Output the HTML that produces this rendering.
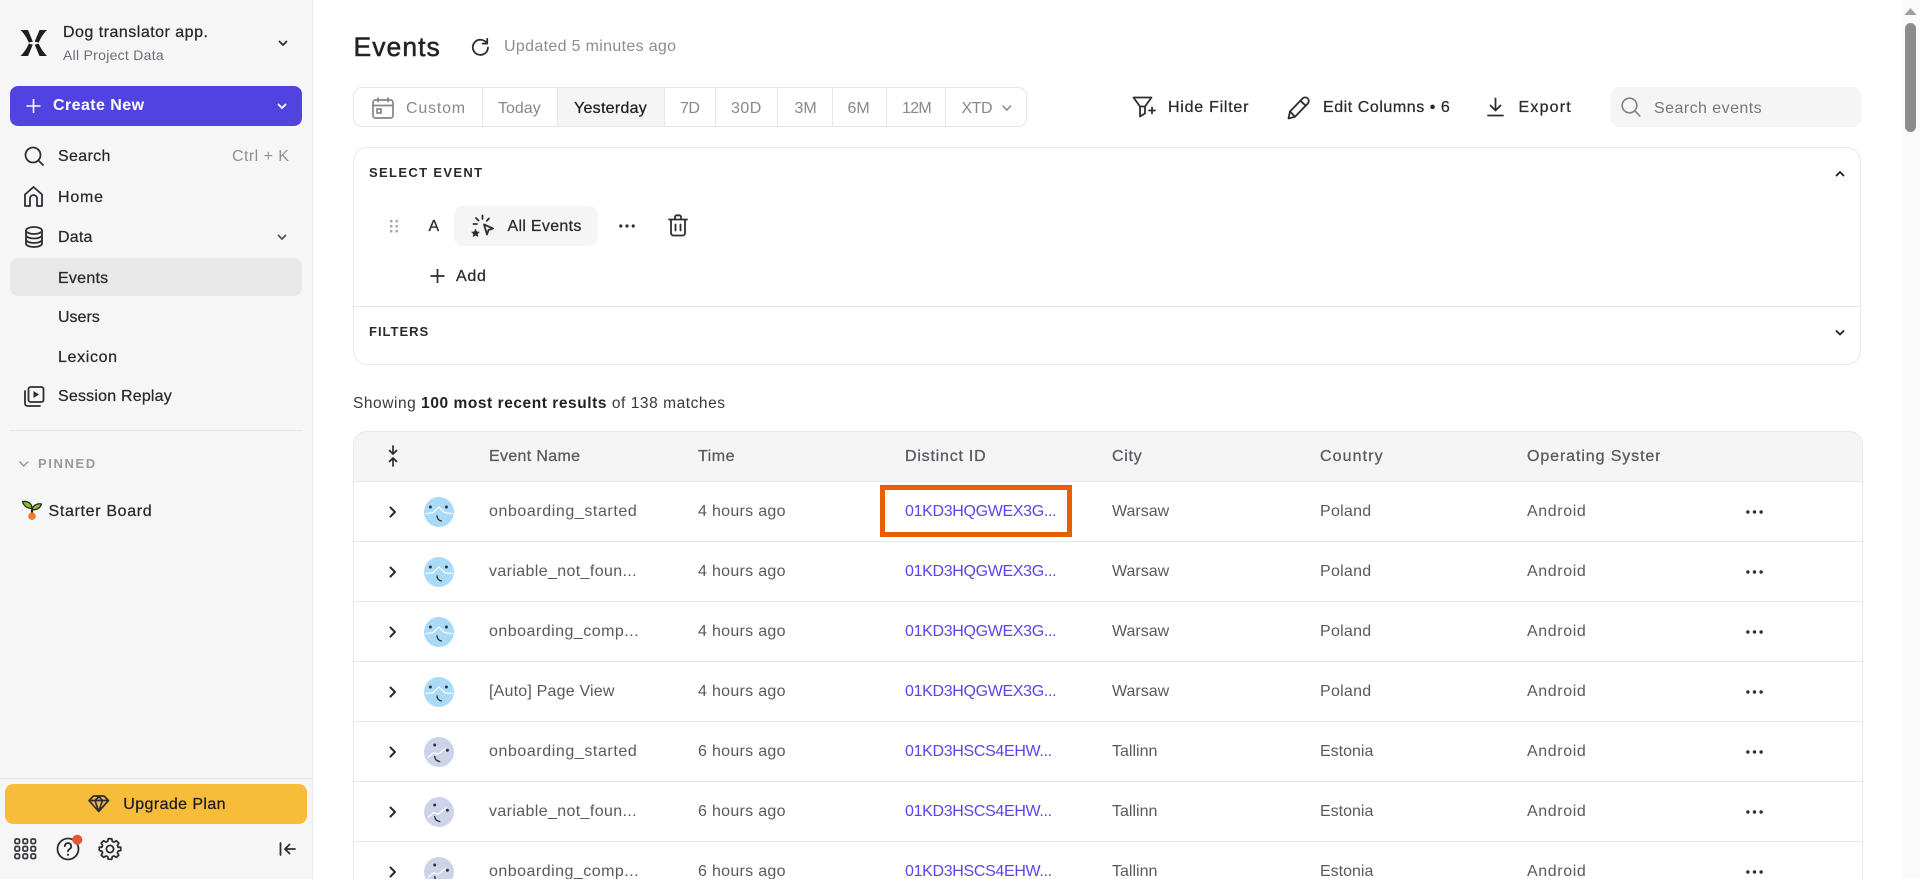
<!DOCTYPE html>
<html lang="en"><head><meta charset="utf-8"><title>Events</title>
<style>
*{box-sizing:border-box}
html,body{margin:0;padding:0;width:1920px;height:879px;overflow:hidden;background:#fff;font-family:"Liberation Sans",sans-serif;font-size:16px;color:#2b292e}
#page{position:relative;width:1920px;height:879px;overflow:hidden;background:#fff}
.a{position:absolute}
.t{position:absolute;white-space:nowrap;line-height:20px;height:20px;margin-top:1px}
.m{-webkit-text-stroke:.25px currentColor}
svg{position:absolute;overflow:visible}
.s{fill:none;stroke:#2f2d33;stroke-width:1.8;stroke-linecap:round;stroke-linejoin:round}
#side{left:0;top:0;width:313px;height:879px;background:#f6f6f6;border-right:1px solid #e8e8e8}
#seg{left:353px;top:87px;width:674px;height:40px;border:1px solid #e6e6e6;border-radius:9px;overflow:hidden;color:#88888d}
#seg i{position:absolute;top:0;height:38px;width:1px;background:#e6e6e6}
.row{position:absolute;left:0;width:1902px;height:60px}
.row:after{content:"";position:absolute;left:353px;width:1510px;top:59px;height:1px;background:#e8e8e8}
.c{position:absolute;top:20px;line-height:20px;white-space:nowrap;color:#5a585e}
.c1{left:489px}.c2{left:698px;letter-spacing:.3px}.c3{left:905px;color:#5a45ea;letter-spacing:-.33px}.c4{left:1112px}.c5{left:1320px}.c6{left:1527px;letter-spacing:.6px}
.h{position:absolute;top:447px;line-height:20px;white-space:nowrap;color:#5c5a60;-webkit-text-stroke:.3px #5c5a60}
</style></head><body>
<div id="page">
<svg width="0" height="0" style="position:absolute"><defs>
<symbol id="chev" viewBox="0 0 8 12"><path d="M1.5 1.5 6 6l-4.5 4.5" fill="none" stroke="#2a282d" stroke-width="2" stroke-linecap="round" stroke-linejoin="round"/></symbol>
<symbol id="dots" viewBox="0 0 18 4"><circle cx="2" cy="2" r="1.8" fill="#2f2d33"/><circle cx="9" cy="2" r="1.8" fill="#2f2d33"/><circle cx="16" cy="2" r="1.8" fill="#2f2d33"/></symbol>
<symbol id="av1" viewBox="0 0 30 30"><circle cx="15" cy="15" r="15" fill="#a9dbf8"/><circle cx="6.4" cy="10" r="1.5" fill="#333"/><circle cx="22.4" cy="10" r="1.5" fill="#333"/><path d="M1.7 16.7 9 15.7 15 10 20.7 15.7 29 16.7" fill="none" stroke="#fff" stroke-width="1.2"/><path d="M13 19q.2 4 4.4 5" fill="none" stroke="#333" stroke-width="1.4" stroke-linecap="round"/></symbol>
<symbol id="av2" viewBox="0 0 30 30"><circle cx="15" cy="15" r="15" fill="#cdd4e9"/><circle cx="10.7" cy="8" r="1.5" fill="#333"/><circle cx="23.4" cy="13.3" r="1.5" fill="#333"/><path d="M4 20.6 9.7 15.6 14 17.3 22.4 10.6" fill="none" stroke="#fff" stroke-width="1.2"/><path d="M10.7 19.6q.3 4 5 5" fill="none" stroke="#333" stroke-width="1.4" stroke-linecap="round"/></symbol>
</defs></svg>

<div id="side" class="a"></div>
<svg style="left:0;top:0" width="60" height="70"><path fill="#1f1d22" d="M20.5 30H28L32.8 41.6 28.8 42.6Q26 35.5 20.5 30ZM47 30H39.5L34.7 41.6 38.7 42.6Q41.5 35.5 47 30ZM20.5 56H28L32.8 44.6 28.8 43.6Q26 50.5 20.5 56ZM47 56H39.5L34.7 44.6 38.7 43.6Q41.5 50.5 47 56Z"/></svg>
<div class="t m" style="left:63px;top:22px;letter-spacing:.49px;color:#29272c">Dog translator app.</div>
<div class="t" style="left:63px;top:44px;font-size:14px;letter-spacing:.28px;color:#6d6d78">All Project Data</div>
<svg style="left:277px;top:40px" width="12" height="8"><path class="s" d="M2.5 1.5 6 5l3.5-3.5"/></svg>
<div class="a" style="left:10px;top:86px;width:292px;height:40px;background:#5143e0;border-radius:8px"></div>
<svg style="left:26px;top:98px" width="16" height="16"><path d="M7.5 1v14M.5 8h14" stroke="#fff" stroke-width="1.6" fill="none"/></svg>
<div class="t" style="left:53px;top:95px;font-weight:bold;letter-spacing:.43px;color:#fff">Create New</div>
<svg style="left:276px;top:103px" width="12" height="8"><path d="M2.5 1.5 6 5l3.5-3.5" fill="none" stroke="#fff" stroke-width="1.8" stroke-linecap="round"/></svg>

<svg style="left:24px;top:146px" width="22" height="22"><circle class="s" cx="9" cy="9" r="7.5"/><path class="s" d="M14.5 14.5 19 19"/></svg>
<div class="t m" style="left:58px;top:146px;letter-spacing:.33px">Search</div>
<div class="t" style="left:232px;top:146px;letter-spacing:.45px;color:#8f8f95">Ctrl + K</div>
<svg style="left:24px;top:186px" width="20" height="22"><path class="s" d="M1 8.5 9.5 1 18 8.5V20H13V12.5A3.5 3.5 0 0 0 6 12.5V20H1Z"/></svg>
<div class="t m" style="left:58px;top:187px;letter-spacing:.8px">Home</div>
<svg style="left:24px;top:226px" width="20" height="22"><ellipse class="s" cx="10" cy="4.5" rx="8" ry="3.5"/><path class="s" d="M2 4.5V17.5C2 19.5 5.5 21 10 21S18 19.5 18 17.5V4.5M2 9C2 11 5.5 12.5 10 12.5S18 11 18 9M2 13.5C2 15.5 5.5 17 10 17S18 15.5 18 13.5"/></svg>
<div class="t m" style="left:58px;top:227px;letter-spacing:.2px">Data</div>
<svg style="left:276px;top:234px" width="12" height="8"><path d="M2.5 1.5 6 5l3.5-3.5" fill="none" stroke="#55535a" stroke-width="1.8" stroke-linecap="round"/></svg>
<div class="a" style="left:10px;top:258px;width:292px;height:38px;background:#e8e8e8;border-radius:8px"></div>
<div class="t m" style="left:58px;top:268px;letter-spacing:.25px">Events</div>
<div class="t m" style="left:58px;top:307px">Users</div>
<div class="t m" style="left:58px;top:347px;letter-spacing:.65px">Lexicon</div>
<svg style="left:24px;top:386px" width="21" height="21"><rect class="s" x="4.5" y="1" width="15" height="15" rx="2"/><path class="s" d="M1 5V17.5A2.5 2.5 0 0 0 3.5 20H16"/><path d="M9.5 5 15 8.5 9.5 12Z" fill="#2f2d33"/></svg>
<div class="t m" style="left:58px;top:386px;letter-spacing:.2px">Session Replay</div>
<div class="a" style="left:10px;top:430px;width:292px;height:1px;background:#e8e8e8"></div>
<svg style="left:19px;top:461px" width="10" height="7"><path d="M1 1 4.8 5 8.6 1" fill="none" stroke="#9a9aa0" stroke-width="1.6" stroke-linecap="round"/></svg>
<div class="t" style="left:38px;top:453px;font-size:13px;font-weight:bold;letter-spacing:1.6px;color:#9a9aa0">PINNED</div>
<svg style="left:22px;top:500px" width="21" height="21"><path d="M10 9.5V15" stroke="#222" stroke-width="2.2" fill="none"/><path d="M.5 1.8C5 .5 10 3 10 8.5 5 8.5 2 6 .5 1.8Z" fill="#8ec21f" stroke="#222" stroke-width="1.3" stroke-linejoin="round"/><path d="M19.5 4C16 3 11 5 10 9.5 14 10.5 18 8.5 19.5 4Z" fill="#8ec21f" stroke="#222" stroke-width="1.3" stroke-linejoin="round"/><circle cx="10" cy="16.2" r="3.8" fill="#ec7a35"/></svg>
<div class="t m" style="left:48.5px;top:501px;letter-spacing:.67px">Starter Board</div>

<div class="a" style="left:0;top:778px;width:312px;height:1px;background:#e8e8e8"></div>
<div class="a" style="left:5px;top:784px;width:302px;height:40px;background:#f8bc3b;border-radius:8px"></div>
<svg style="left:88px;top:795px" width="22" height="18"><path d="M1 5.5 5.5 1H16L20.5 5.5 10.7 16.5ZM1 5.5H20.5M7 5.5 10.7 16.5 14.5 5.5 11 1.5 7 5.5" fill="none" stroke="#2f2d33" stroke-width="1.7" stroke-linejoin="round"/></svg>
<div class="t m" style="left:123.3px;top:794px;letter-spacing:.4px;color:#1c1b20">Upgrade Plan</div>
<svg style="left:14px;top:838px" width="23" height="22"><g fill="none" stroke="#3a383e" stroke-width="1.7"><rect x="1" y="1" width="4.5" height="4.5" rx="1.3"/><rect x="9" y="1" width="4.5" height="4.5" rx="1.3"/><rect x="17" y="1" width="4.5" height="4.5" rx="1.3"/><rect x="1" y="8.5" width="4.5" height="4.5" rx="1.3"/><rect x="9" y="8.5" width="4.5" height="4.5" rx="1.3"/><rect x="17" y="8.5" width="4.5" height="4.5" rx="1.3"/><rect x="1" y="16" width="4.5" height="4.5" rx="1.3"/><rect x="9" y="16" width="4.5" height="4.5" rx="1.3"/><rect x="17" y="16" width="4.5" height="4.5" rx="1.3"/></g></svg>
<svg style="left:56px;top:836px" width="30" height="26"><circle class="s" cx="12" cy="13" r="10.5"/><path class="s" d="M8.8 10.2a3.2 3.2 0 1 1 4.8 2.8c-1 .6-1.6 1.2-1.6 2.4"/><circle cx="12" cy="18.8" r="1.1" fill="#2f2d33"/><circle cx="21.3" cy="3.7" r="5" fill="#e8533a"/></svg>
<svg style="left:98px;top:837px" width="24" height="24"><circle class="s" cx="12" cy="12" r="3.6"/><path class="s" style="stroke-width:2.1" d="M10 1.5h4l.7 3.1 2 .9 2.8-1.6 2.8 2.8-1.6 2.8.9 2 3-.1v4l-3 .7-.9 2 1.6 2.8-2.8 2.5-2.8-1.6-2 .9-.7 3h-4l-.7-3-2-.9-2.8 1.6-2.8-2.5 1.6-2.8-.9-2-3-.7v-4l3 .1.9-2-1.6-2.8 2.8-2.8 2.8 1.6 2-.9Z" transform="translate(12 12) scale(.85) translate(-12 -13.6)"/></svg>
<svg style="left:279px;top:841px" width="18" height="16"><path class="s" d="M1.5 2V14M16 8H6.5M10.5 3.5 6 8l4.5 4.5"/></svg>

<div class="t m" style="left:353.5px;top:35px;font-size:26.5px;line-height:22px;height:22px;letter-spacing:1.05px;-webkit-text-stroke:.5px #232126;color:#232126">Events</div>
<svg style="left:471px;top:37px" width="19" height="19"><path class="s" d="M15.8 6.2A7.6 7.6 0 1 0 17 10.5"/><path class="s" d="M16.2 1.8V6.6H11.6"/></svg>
<div class="t" style="left:504px;top:36px;letter-spacing:.33px;color:#8d8d92">Updated 5 minutes ago</div>

<div id="seg" class="a">
<div class="a" style="left:204px;top:0;width:106px;height:38px;background:#f5f5f5"></div>
<i style="left:128px"></i><i style="left:203px"></i><i style="left:310px"></i><i style="left:361px"></i><i style="left:423px"></i><i style="left:478px"></i><i style="left:532px"></i><i style="left:591px"></i>
</div>
<svg style="left:372px;top:97px" width="22" height="22"><g fill="none" stroke="#85858a" stroke-width="1.7" stroke-linecap="round"><rect x="1" y="3" width="20" height="18" rx="2.5"/><path d="M1 8.5H21M6 1V4.5M16 1V4.5"/><rect x="5" y="12" width="4" height="4"/></g></svg>
<div class="t" style="left:406px;top:98px;letter-spacing:.8px;color:#88888d">Custom</div>
<div class="t" style="left:498px;top:98px;color:#88888d">Today</div>
<div class="t m" style="left:574px;top:98px;letter-spacing:.28px;color:#232126">Yesterday</div>
<div class="t" style="left:680px;top:98px;letter-spacing:-.5px;color:#88888d">7D</div>
<div class="t" style="left:731px;top:98px;letter-spacing:.5px;color:#88888d">30D</div>
<div class="t" style="left:794.5px;top:98px;color:#88888d">3M</div>
<div class="t" style="left:847.5px;top:98px;color:#88888d">6M</div>
<div class="t" style="left:902px;top:98px;letter-spacing:-.7px;color:#88888d">12M</div>
<div class="t" style="left:961.5px;top:98px;letter-spacing:-.5px;color:#88888d">XTD</div>
<svg style="left:1002px;top:105px" width="10" height="7"><path d="M1 1 4.8 5 8.6 1" fill="none" stroke="#88888d" stroke-width="1.5" stroke-linecap="round"/></svg>

<svg style="left:1132px;top:96px" width="26" height="22"><path class="s" d="M1.5 1.5H19.5L13 10.5H8ZM8 10.5V20.5L13 17.5V10.5"/><path class="s" d="M17 14.5H23M20 11.5V17.5"/></svg>
<div class="t m" style="left:1168px;top:97px;letter-spacing:.75px">Hide Filter</div>
<svg style="left:1287px;top:96px" width="24" height="24"><path class="s" d="M1.5 22.5 3 15.5 15.5 2.5A2.8 2.8 0 0 1 20.8 7.5L8 20.8ZM3 15.5 8 20.8M13.5 4.8 18.8 9.8"/></svg>
<div class="t m" style="left:1323px;top:97px;letter-spacing:.55px">Edit Columns • 6</div>
<svg style="left:1487px;top:97px" width="17" height="20"><path class="s" d="M8.5 1.5V13M3.5 8.5 8.5 13.5 13.5 8.5M1 18.5H16"/></svg>
<div class="t m" style="left:1518.5px;top:97px;letter-spacing:1.2px">Export</div>
<div class="a" style="left:1611px;top:87px;width:250px;height:40px;background:#f5f5f5;border-radius:8px"></div>
<svg style="left:1621px;top:97px" width="21" height="21"><circle cx="8.5" cy="8.5" r="7.3" fill="none" stroke="#808085" stroke-width="1.6"/><path d="M14 14 18.8 19" stroke="#808085" stroke-width="1.6" fill="none" stroke-linecap="round"/></svg>
<div class="t" style="left:1654px;top:98px;letter-spacing:.45px;color:#77777c">Search events</div>

<div class="a" style="left:353px;top:147px;width:1508px;height:218px;border:1px solid #e8e8e8;border-radius:14px"></div>
<div class="t" style="left:369px;top:162px;font-size:13px;font-weight:bold;letter-spacing:1.35px;color:#2b292e">SELECT EVENT</div>
<svg style="left:1834px;top:170px" width="12" height="8"><path d="M2.5 5.5 6 2 9.5 5.5" fill="none" stroke="#2a282d" stroke-width="1.9" stroke-linecap="round" stroke-linejoin="round"/></svg>
<svg style="left:389px;top:219px" width="10" height="14"><g fill="#a6a6aa"><rect x="1" y="1" width="2.4" height="2.4"/><rect x="6.5" y="1" width="2.4" height="2.4"/><rect x="1" y="6" width="2.4" height="2.4"/><rect x="6.5" y="6" width="2.4" height="2.4"/><rect x="1" y="11" width="2.4" height="2.4"/><rect x="6.5" y="11" width="2.4" height="2.4"/></g></svg>
<div class="t m" style="left:428.5px;top:216px;letter-spacing:.2px">A</div>
<div class="a" style="left:454px;top:206px;width:144px;height:40px;background:#f5f5f5;border-radius:9px"></div>
<svg style="left:471px;top:214px" width="24" height="24"><path class="s" d="M13 10.5 22 14.5 17.5 16 16 20.5Z"/><path class="s" d="M11.5 1.5V5M5 4 7.5 6.5M18 4.5 15.8 6.8M2.5 10H6" /><path d="M4.5 14.5 5.9 17.5 8.8 17.9 6.7 20 7.3 23 4.5 21.5 1.7 23 2.3 20 .2 17.9 3.1 17.5Z" fill="#2f2d33"/></svg>
<div class="t m" style="left:507.5px;top:216px;letter-spacing:.3px">All Events</div>
<svg style="left:619px;top:224px" width="16" height="4"><use href="#dots"/></svg>
<svg style="left:668px;top:214px" width="20" height="23"><path class="s" d="M1 5.5H19M7 5.5V3A1.8 1.8 0 0 1 8.8 1.3H11.2A1.8 1.8 0 0 1 13 3V5.5M3 5.5 3 19A2.5 2.5 0 0 0 5.5 21.5H14.5A2.5 2.5 0 0 0 17 19L17 5.5M7.5 10.5V16.5M12.5 10.5V16.5"/></svg>
<svg style="left:430px;top:268px" width="16" height="16"><path d="M7.5 1V15M.5 8H14.5" fill="none" stroke="#2f2d33" stroke-width="1.7"/></svg>
<div class="t m" style="left:456px;top:266px;letter-spacing:.7px">Add</div>
<div class="a" style="left:354px;top:306px;width:1506px;height:1px;background:#e8e8e8"></div>
<div class="t" style="left:369px;top:321px;font-size:13px;font-weight:bold;letter-spacing:1px;color:#2b292e">FILTERS</div>
<svg style="left:1834px;top:329px" width="12" height="8"><path d="M2.5 2 6 5.5 9.5 2" fill="none" stroke="#2a282d" stroke-width="1.9" stroke-linecap="round" stroke-linejoin="round"/></svg>

<div class="t" style="left:353px;top:393px;font-size:15.5px;letter-spacing:.55px;color:#3a383e">Showing <b style="color:#232126">100 most recent results</b> of 138 matches</div>

<div class="a" style="left:353px;top:431px;width:1510px;height:470px;border:1px solid #e8e8e8;border-radius:14px 14px 0 0;overflow:hidden"><div style="height:50px;background:#f5f5f5;border-bottom:1px solid #e8e8e8"></div></div>
<svg style="left:387px;top:445px" width="12" height="22"><path class="s" d="M6 1V9M2.5 5.5 6 9 9.5 5.5M6 21V13M2.5 16.5 6 13 9.5 16.5" style="stroke-width:1.7"/></svg>
<div class="h" style="left:489px;letter-spacing:.33px">Event Name</div>
<div class="h" style="left:698px;letter-spacing:.5px">Time</div>
<div class="h" style="left:905px;letter-spacing:.78px">Distinct ID</div>
<div class="h" style="left:1112px;letter-spacing:.7px">City</div>
<div class="h" style="left:1320px;letter-spacing:1.1px">Country</div>
<div class="h" style="left:1527px;width:133px;overflow:hidden;letter-spacing:.9px">Operating System</div>

<div class="row" style="top:482px"><svg style="left:389px;top:24px" width="8" height="12"><use href="#chev"/></svg><svg style="left:424px;top:15px" width="30" height="30"><use href="#av1"/></svg><div class="c c1" style="letter-spacing:.58px">onboarding_started</div><div class="c c2">4 hours ago</div><div class="c c3">01KD3HQGWEX3G...</div><div class="c c4">Warsaw</div><div class="c c5" style="letter-spacing:.27px">Poland</div><div class="c c6">Android</div><svg style="left:1746px;top:28px" width="17" height="4"><use href="#dots"/></svg></div>
<div class="row" style="top:542px"><svg style="left:389px;top:24px" width="8" height="12"><use href="#chev"/></svg><svg style="left:424px;top:15px" width="30" height="30"><use href="#av1"/></svg><div class="c c1" style="letter-spacing:.37px">variable_not_foun...</div><div class="c c2">4 hours ago</div><div class="c c3">01KD3HQGWEX3G...</div><div class="c c4">Warsaw</div><div class="c c5" style="letter-spacing:.27px">Poland</div><div class="c c6">Android</div><svg style="left:1746px;top:28px" width="17" height="4"><use href="#dots"/></svg></div>
<div class="row" style="top:602px"><svg style="left:389px;top:24px" width="8" height="12"><use href="#chev"/></svg><svg style="left:424px;top:15px" width="30" height="30"><use href="#av1"/></svg><div class="c c1" style="letter-spacing:.48px">onboarding_comp...</div><div class="c c2">4 hours ago</div><div class="c c3">01KD3HQGWEX3G...</div><div class="c c4">Warsaw</div><div class="c c5" style="letter-spacing:.27px">Poland</div><div class="c c6">Android</div><svg style="left:1746px;top:28px" width="17" height="4"><use href="#dots"/></svg></div>
<div class="row" style="top:662px"><svg style="left:389px;top:24px" width="8" height="12"><use href="#chev"/></svg><svg style="left:424px;top:15px" width="30" height="30"><use href="#av1"/></svg><div class="c c1" style="letter-spacing:.2px">[Auto] Page View</div><div class="c c2">4 hours ago</div><div class="c c3">01KD3HQGWEX3G...</div><div class="c c4">Warsaw</div><div class="c c5" style="letter-spacing:.27px">Poland</div><div class="c c6">Android</div><svg style="left:1746px;top:28px" width="17" height="4"><use href="#dots"/></svg></div>
<div class="row" style="top:722px"><svg style="left:389px;top:24px" width="8" height="12"><use href="#chev"/></svg><svg style="left:424px;top:15px" width="30" height="30"><use href="#av2"/></svg><div class="c c1" style="letter-spacing:.58px">onboarding_started</div><div class="c c2">6 hours ago</div><div class="c c3">01KD3HSCS4EHW...</div><div class="c c4">Tallinn</div><div class="c c5">Estonia</div><div class="c c6">Android</div><svg style="left:1746px;top:28px" width="17" height="4"><use href="#dots"/></svg></div>
<div class="row" style="top:782px"><svg style="left:389px;top:24px" width="8" height="12"><use href="#chev"/></svg><svg style="left:424px;top:15px" width="30" height="30"><use href="#av2"/></svg><div class="c c1" style="letter-spacing:.37px">variable_not_foun...</div><div class="c c2">6 hours ago</div><div class="c c3">01KD3HSCS4EHW...</div><div class="c c4">Tallinn</div><div class="c c5">Estonia</div><div class="c c6">Android</div><svg style="left:1746px;top:28px" width="17" height="4"><use href="#dots"/></svg></div>
<div class="row" style="top:842px"><svg style="left:389px;top:24px" width="8" height="12"><use href="#chev"/></svg><svg style="left:424px;top:15px" width="30" height="30"><use href="#av2"/></svg><div class="c c1" style="letter-spacing:.48px">onboarding_comp...</div><div class="c c2">6 hours ago</div><div class="c c3">01KD3HSCS4EHW...</div><div class="c c4">Tallinn</div><div class="c c5">Estonia</div><div class="c c6">Android</div><svg style="left:1746px;top:28px" width="17" height="4"><use href="#dots"/></svg></div>

<div class="a" style="left:880px;top:485px;width:192px;height:52px;border:5px solid #e65f00"></div>

<div class="a" style="left:1902px;top:0;width:18px;height:879px;background:#fafafa"></div>
<div class="a" style="left:1905px;top:23px;width:11px;height:109px;background:#8c8c8c;border-radius:6px"></div>
<svg style="left:1904px;top:7px" width="13" height="9"><path d="M6.5 1 12.5 8H.5Z" fill="#a0a0a0"/></svg>
</div>
</body></html>
